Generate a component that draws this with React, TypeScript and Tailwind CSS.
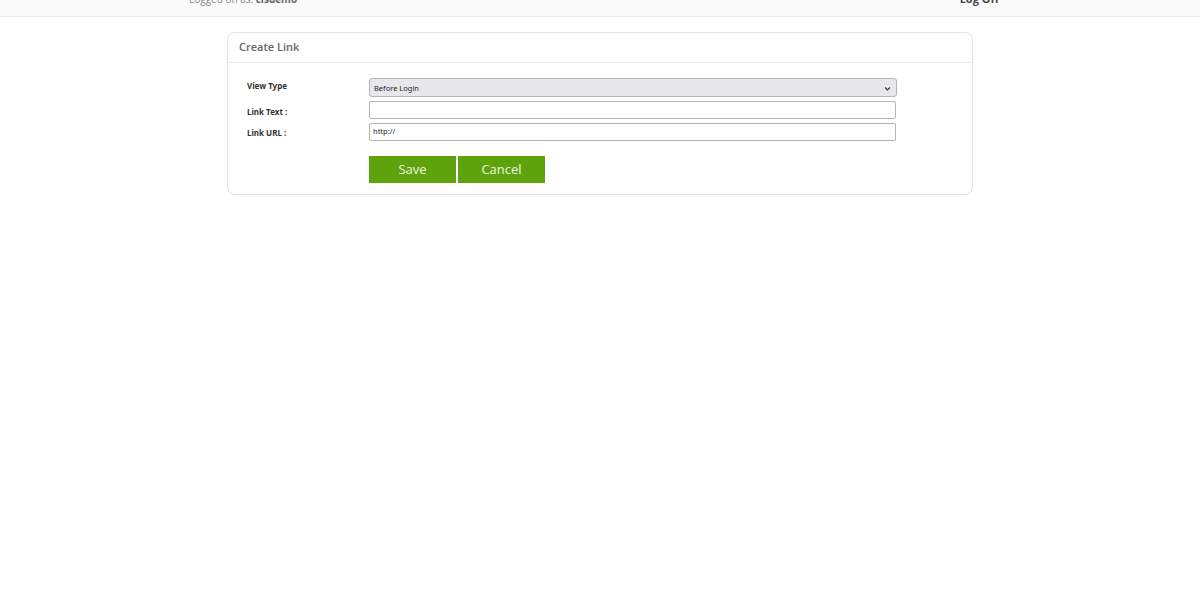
import React from "react";

export default function App() {
  const lab = { fontFamily: '"Noto Sans", "DejaVu Sans", sans-serif' };
  return (
    <div className="min-h-[600px] w-[1200px] bg-white" style={{ fontFamily: '"Open Sans", "DejaVu Sans", sans-serif' }}>
      <div className="h-[17px] bg-[#fafafa] border-b border-[#ebebeb] overflow-hidden">
        <div className="w-[822px] mx-auto flex justify-between items-start -mt-[9px]">
          <div className="text-[10px] text-[#888] leading-[16px]">
            Logged on as: <span className="font-bold text-[#666]">cisdemo</span>
          </div>
          <div className="text-[11px] font-bold text-[#444] leading-[16px] pr-[12px]">Log Off</div>
        </div>
      </div>
      <div className="w-[746px] mx-auto mt-[15px] border border-[#e3e3e3] rounded-[8px]">
        <div className="h-[30px] border-b border-[#e8e8e8] flex items-center pl-[11px]">
          <span className="text-[11px] text-[#666] font-semibold">Create Link</span>
        </div>
        <div className="pl-[19px] pt-[14px] pb-[11px]">
          <div className="flex items-center h-[20px]" style={lab}>
            <div className="w-[122px] text-[8px] font-bold text-[#333] -mt-[3px]">View Type</div>
            <div className="relative w-[528px] h-[19px] bg-[#e8e8ec] border border-[#b5b5b5] rounded-[3px] flex items-center pl-[4px] pt-[3px]">
              <span className="text-[7.5px] text-[#222]">Before Login</span>
              <svg className="absolute right-[5px] top-[6px]" width="7" height="7" viewBox="0 0 10 10">
                <path d="M1.5 3.5 L5 7 L8.5 3.5" fill="none" stroke="#333" strokeWidth="1.8" />
              </svg>
            </div>
          </div>
          <div className="flex items-center h-[18px] mt-[4px]" style={lab}>
            <div className="w-[122px] text-[8px] font-bold text-[#333] pt-[4px]">Link Text :</div>
            <div className="w-[527px] h-[18px] bg-white border border-[#b5b5b5] rounded-[2px]"></div>
          </div>
          <div className="flex items-center h-[18px] mt-[4px]" style={lab}>
            <div className="w-[122px] text-[8px] font-bold text-[#333] pt-[2px]">Link URL :</div>
            <div className="w-[527px] h-[18px] bg-white border border-[#b5b5b5] rounded-[2px] flex items-center pl-[3px]">
              <span className="text-[7.5px] text-[#222]">http://</span>
            </div>
          </div>
          <div className="flex gap-[2px] ml-[122px] mt-[15px]">
            <div className="w-[87px] h-[27px] bg-[#5fa30c] flex items-center justify-center text-[13px] text-[#eef6e0]">Save</div>
            <div className="w-[87px] h-[27px] bg-[#5fa30c] flex items-center justify-center text-[13px] text-[#eef6e0]">Cancel</div>
          </div>
        </div>
      </div>
    </div>
  );
}
